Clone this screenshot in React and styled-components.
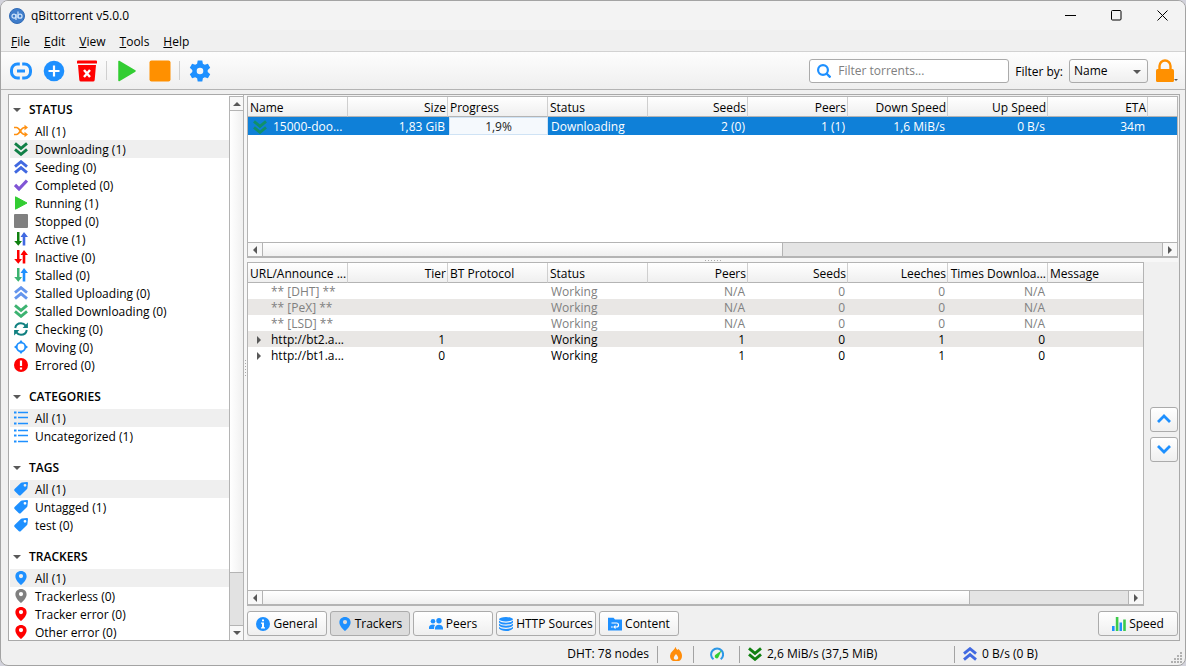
import React from 'react'
import styled, { createGlobalStyle } from 'styled-components'

const GlobalStyle = createGlobalStyle`
    * { box-sizing: border-box; }
    body {
        margin: 0;
        background: #d3d3dc;
        color: #000;
        font: 12px/16px 'Open Sans', 'Noto Sans', sans-serif;
    }
    button, input, select { font: inherit; color: inherit; margin: 0; }
    button { padding: 0; border: 0; background: none; }
    svg { display: block; flex: none; }
    ul { list-style: none; margin: 0; padding: 0; }
`;

const Window = styled.div`
    height: 100vh;
    min-height: 500px;
    display: flex;
    flex-direction: column;
    overflow: hidden;
    background: #f0f0f0;
    border: 1px solid #a3a3a3;
    border-radius: 8px;
`;

const TitleBar = styled.header`
    display: flex;
    align-items: center;
    height: 29px;
    padding-left: 8px;
    background: #f3f3f3;
`;

const Title = styled.h1`
    flex: 1;
    margin: 0 0 0 6px;
    font-size: 12px;
    font-weight: 400;
`;

const WindowButton = styled.button`
    width: 46px;
    height: 28px;
    display: flex;
    align-items: center;
    justify-content: center;
`;

const MenuBar = styled.nav`
    display: flex;
    gap: 14px;
    height: 21px;
    padding: 2px 10px 0;
`;

const MenuItem = styled.button`
    line-height: 18px;
    &::first-letter {
        text-decoration: underline;
    }
`;

const Toolbar = styled.div`
    display: flex;
    align-items: center;
    height: 39px;
    padding: 0 7px 0 3px;
    border-top: 1px solid #d2d2d2;
    border-bottom: 1px solid #b4b4b4;
    background: linear-gradient(#fdfdfd, #efefef);
`;

const ToolButton = styled.button`
    width: 33px;
    height: 32px;
    display: flex;
    align-items: center;
    justify-content: center;
`;

const ToolSeparator = styled.span`
    width: 1px;
    height: 19px;
    margin: 0 3px;
    background: #cfcfcf;
`;

const SearchBox = styled.label`
    display: flex;
    align-items: center;
    gap: 7px;
    width: 200px;
    height: 24px;
    margin-left: auto;
    padding: 0 7px;
    background: #fff;
    border: 1px solid #ababab;
    border-radius: 3px;
`;

const SearchInput = styled.input`
    flex: 1;
    min-width: 0;
    padding: 0;
    border: 0;
    outline: 0;
    background: none;
    &::placeholder {
        color: #808080;
        opacity: 1;
    }
`;

const FilterLabel = styled.label`
    margin: 3px 6px 0;
`;

const SelectWrapper = styled.div`
    position: relative;
    width: 79px;
    svg {
        position: absolute;
        right: 7px;
        top: 9px;
        pointer-events: none;
    }
`;

const FilterSelect = styled.select`
    appearance: none;
    width: 100%;
    height: 24px;
    padding: 0 4px;
    border: 1px solid #ababab;
    border-radius: 3px;
    background: linear-gradient(#fff, #efefef);
`;

const LockButton = styled.button`
    display: flex;
    align-items: flex-end;
    margin-left: 8px;
`;

const Workspace = styled.div`
    flex: 1;
    min-height: 0;
    display: flex;
    margin: 4px 5px 0 7px;
    padding-right: 1px;
    border: 1px solid #a9a9a9;
`;

const Sidebar = styled.aside`
    display: flex;
    width: 235px;
    background: #fff;
    border-right: 1px solid #b4b4b4;
`;

const FilterList = styled.div`
    flex: 1;
    overflow: hidden;
    padding: 2px 0 0 1px;
`;

const FilterSection = styled.section`
    margin-bottom: 10px;
`;

const SectionTitle = styled.button`
    display: flex;
    align-items: center;
    gap: 8px;
    height: 25px;
    padding-left: 3px;
    font-weight: 600;
`;

const FilterRow = styled.li`
    display: flex;
    align-items: center;
    gap: 7px;
    height: 18px;
    padding: 1px 0 0 4px;
    background: ${props => props.$active ? '#efefef' : 'transparent'};
    svg {
        margin-top: -2px;
    }
`;

const VerticalBar = styled.div`
    display: flex;
    flex-direction: column;
    width: 14px;
    margin-top: 1px;
    border-left: 1px solid #b4b4b4;
    background: #e2e2e2;
`;

const HorizontalBar = styled.div`
    display: flex;
    height: 15px;
    margin-top: auto;
    border: solid #b4b4b4;
    border-width: 1px 0;
    background: #e4e4e4;
`;

const ScrollArrow = styled.button`
    flex: none;
    display: flex;
    align-items: center;
    justify-content: center;
    width: ${props => props.$vertical ? '13px' : '15px'};
    height: ${props => props.$vertical ? '15px' : '13px'};
    background: #f8f8f8;
    border: 0 solid #b4b4b4;
    border-width: ${props => props.$edge};
`;

const Thumb = styled.div`
    flex: 0 0 ${props => props.$size};
    margin-${props => props.$vertical ? 'bottom' : 'right'}: auto;
    border: 0 solid #b4b4b4;
    border-width: ${props => props.$vertical ? '0 0 1px' : '0 1px 0 0'};
    background: linear-gradient(${props => props.$vertical ? 'to right' : 'to bottom'}, #fff, #f0f0f0);
`;

const Splitter = styled.div`
    flex: none;
    display: flex;
    align-items: center;
    justify-content: center;
    width: ${props => props.$vertical ? '3px' : 'auto'};
    height: ${props => props.$vertical ? 'auto' : '4px'};
    background: #f7f7f7;
`;

const Main = styled.main`
    flex: 1;
    min-width: 0;
    display: flex;
    flex-direction: column;
    padding-top: 1px;
`;

const Pane = styled.section`
    flex: ${props => props.$height ? '0 0 ' + props.$height : '1'};
    min-width: 0;
    display: flex;
    flex-direction: column;
    background: #fff;
    border: 1px solid #b4b4b4;
`;

const Details = styled.div`
    flex: 1;
    min-height: 0;
    display: flex;
    gap: 6px;
`;

const OrderButtons = styled.div`
    display: flex;
    flex-direction: column;
    justify-content: center;
    gap: 5px;
`;

const DataTable = styled.table`
    width: 100%;
    table-layout: fixed;
    border-collapse: separate;
    border-spacing: 0;
`;

const HeadCell = styled.th`
    width: ${props => props.$fill ? 'auto' : '100px'};
    height: 20px;
    padding: 2px 1px 0 2px;
    overflow: hidden;
    white-space: nowrap;
    font-weight: 400;
    text-align: ${props => props.$right ? 'right' : 'left'};
    background: linear-gradient(#fff, #efefef);
    border-right: ${props => props.$fill ? '0' : '1px solid #cfcfcf'};
    border-bottom: 1px solid #b4b4b4;
`;

const Cell = styled.td`
    padding: 0 3px;
    overflow: hidden;
    white-space: nowrap;
    text-align: ${props => props.$right ? 'right' : 'left'};
`;

const TorrentRow = styled.tr`
    height: 18px;
    color: #fff;
    background: #0f80d8;
    ${Cell} {
        padding-top: 2px;
    }
`;

const TrackerRow = styled.tr`
    height: 16px;
    line-height: 14px;
    color: ${props => props.$muted ? '#808080' : '#000'};
    &:nth-child(even) {
        background: #e9e7e5;
    }
    ${Cell} {
        padding-top: 2px;
    }
`;

const NameContent = styled.div`
    display: flex;
    align-items: center;
    gap: 6px;
    padding-left: 2px;
`;

const TrackerName = styled.div`
    display: flex;
    align-items: center;
    padding-left: 4px;
`;

const ArrowSlot = styled.span`
    width: 16px;
`;

const ProgressCell = styled.td`
    padding: 0 0 0 1px;
`;

const Progress = styled.div`
    height: 18px;
    line-height: 18px;
    text-align: center;
    color: #222;
    background: #f5f9fd;
    border: 1px solid #cfe3f5;
`;

const Tabs = styled.div`
    display: flex;
    gap: 3px;
    padding: 5px 0 4px;
`;

const TabButton = styled.button`
    display: flex;
    align-items: center;
    justify-content: center;
    gap: 3px;
    width: ${props => props.$width || '80px'};
    height: 25px;
    margin-left: ${props => props.$end ? 'auto' : '0'};
    border: 1px solid #ababab;
    border-radius: 3px;
    background: ${props => props.$active ? '#dcdcdc' : 'linear-gradient(#fff, #efefef)'};
`;

const StatusBar = styled.footer`
    display: flex;
    justify-content: flex-end;
    align-items: center;
    height: 24px;
    padding-top: 2px;
`;

const StatusItem = styled.div`
    display: flex;
    align-items: center;
    gap: 5px;
    width: ${props => props.$width || 'auto'};
    height: 17px;
    padding: 0 8px;
    border-left: ${props => props.$first ? '0' : '1px solid #a3a3a3'};
`;

const StatusIcon = styled(StatusItem)`
    justify-content: center;
`;

const Grip = styled.div`
    align-self: flex-end;
    margin: 0 -6px 0 auto;
`;

const Svg = ({ size = 14, children }) => (
    <svg width={size} height={size} viewBox="0 0 14 14" aria-hidden="true">{children}</svg>
);

const Chevrons = ({ color, up }) => (
    <Svg>
        <path
            d={up ? 'M1 6.600 7 1.700l6 4.900M1 12.600 7 7.700l6 4.900' : 'M1 1.400 7 6.300l6-4.900M1 7.400 7 12.300l6-4.900'}
            fill="none" stroke={color} strokeWidth="2.900"
        />
    </Svg>
);

const Arrows = ({ down, up }) => (
    <Svg>
        <path d="M3 0h2.500v9H8l-3.700 4.800L.2 9H3z" fill={down} />
        <path d="M8.700 13.500h2.600V5H14L10 0 6.500 5h2.200z" fill={up} />
    </Svg>
);

const Shuffle = () => (
    <Svg>
        <path d="M0 3.500h2.500c3.500 0 4 7 8 7h1.500M0 10.500h2.500c3.500 0 4-7 8-7h1.500" fill="none" stroke="#ff9010" strokeWidth="1.700" />
        <path d="m10.500.800 3.500 2.700-3.500 2.700zM10.500 7.800l3.500 2.700-3.500 2.700z" fill="#ff9010" />
    </Svg>
);

const Check = () => (
    <Svg><path d="m1 7 4 4 8-8.500" fill="none" stroke="#8055d5" strokeWidth="3.200" /></Svg>
);

const Play = () => (
    <Svg><path d="M1.500.8v12.400L13 7z" fill="#32cd32" stroke="#32cd32" strokeLinejoin="round" /></Svg>
);

const Stop = () => (
    <Svg><rect width="14" height="14" rx="1" fill="#808080" /></Svg>
);

const Recheck = () => (
    <Svg>
        <path d="M1.200 6C1.800 3 4.200 1.300 7 1.300c2 0 3.600.9 4.600 2.300M12.800 8c-.6 3-3 4.700-5.800 4.700-2 0-3.600-.9-4.600-2.300" fill="none" stroke="#108080" strokeWidth="2" />
        <path d="M13.900.5V6H8.600zM.1 13.500V8h5.300z" fill="#108080" />
    </Svg>
);

const Moving = () => (
    <Svg>
        <circle cx="7" cy="7" r="4.300" fill="none" stroke="#1e90ff" strokeWidth="1.800" />
        <path d="M7 0 9 2.500H5zM7 14l2-2.500H5zM0 7l2.500-2v4zM14 7l-2.500-2v4z" fill="#1e90ff" />
    </Svg>
);

const ErrorIcon = () => (
    <Svg>
        <circle cx="7" cy="7" r="7" fill="#f00" />
        <path d="M5.900 2.500h2.200v5.600H5.900zM5.900 9.400h2.200v2.200H5.900z" fill="#fff" />
    </Svg>
);

const ListIcon = () => (
    <Svg>
        <path d="M4 1.500h10M4 6.500h10M4 12.500h10" stroke="#1e90ff" strokeWidth="1.400" />
        <path d="M0 1.500h2.500M0 6.500h2.500M0 12.500h2.500" stroke="#1e90ff" strokeWidth="2.200" />
    </Svg>
);

const Tag = () => (
    <Svg>
        <path fillRule="evenodd" d="M7.800.6 13 0q1 0 1 1l-.6 5.200q-.1.600-.6 1L6.700 13.200q-.9.800-1.800 0L.6 8.900q-.8-.9 0-1.800L6.800 1q.4-.4 1-.4zM11 1.900a1.400 1.400 0 1 0 0 2.800 1.400 1.400 0 0 0 0-2.800z" fill="#1e90ff" />
    </Svg>
);

const Pin = ({ color = '#1e90ff' }) => (
    <Svg>
        <path fillRule="evenodd" d="M7 0C3.700 0 1.400 2.400 1.400 5.400 1.400 8.500 4.500 12 7 14c2.500-2 5.600-5.500 5.600-8.600C12.600 2.400 10.300 0 7 0zm0 3a2.100 2.100 0 1 1 0 4.200A2.100 2.100 0 0 1 7 3z" fill={color} />
    </Svg>
);

const Info = () => (
    <Svg>
        <circle cx="7" cy="7" r="7" fill="#1e90ff" />
        <path d="M6 2.500h2v1.800H6zM5 5.500h3v4.700h1v1.200H5v-1.200h1V6.700H5z" fill="#fff" />
    </Svg>
);

const PeersIcon = () => (
    <Svg>
        <circle cx="4" cy="4.200" r="2.300" fill="#1e90ff" />
        <circle cx="10" cy="3.800" r="2.700" fill="#1e90ff" />
        <path d="M0 12V10q.5-2.500 4-2.500 1.500 0 2 .6Q5 9 5 12zM6 12.500v-1.700q.6-3 4-3t4 3v1.700z" fill="#1e90ff" />
    </Svg>
);

const Sources = () => (
    <Svg>
        <ellipse cx="7" cy="2.200" rx="7" ry="2.200" fill="#1e90ff" />
        <path d="M0 3.500q2 2.200 7 2.200t7-2.200v1.900q-2 2.200-7 2.200T0 5.400zM0 6.600q2 2.200 7 2.200t7-2.200v1.900q-2 2.200-7 2.200T0 8.500zM0 9.700q2 2.200 7 2.200t7-2.200v1.900Q12 14 7 14t-7-2.400z" fill="#1e90ff" />
    </Svg>
);

const ContentIcon = () => (
    <Svg>
        <path d="M0 .8h5.500L7 2.500h7v11H0z" fill="#1e90ff" />
        <path d="M3.500 6h5q2 0 2 2t-2 2H7M3 10h1.800" fill="none" stroke="#fff" strokeWidth="1.200" />
        <path d="m7.500 7.800-2.300 2.200 2.300 2.200z" fill="#fff" />
    </Svg>
);

const SpeedIcon = () => (
    <Svg>
        <path d="M0 9h2.600v5H0zM7.500 5.500H10V14H7.500z" fill="#1e90ff" />
        <path d="M3.800 0h2.600v14H3.800zM11.200 2.500h2.600V14h-2.600z" fill="#3ccb4c" />
    </Svg>
);

const Flame = () => (
    <Svg>
        <path fillRule="evenodd" d="M6.500-.5q.4 2.500 2 3.600l.8-1q3.700 3 3.700 6.700 0 5.700-6 5.700T1 8.800Q1 6 4 3.500q2.200-1.700 2.500-4zM7 7q-2.300 2.400-2.300 4 0 1.800 2.300 1.800T9.300 11Q9.300 9.400 7 7z" fill="#ff8c0a" />
    </Svg>
);

const Gauge = () => (
    <Svg>
        <path d="M3.500 12.300A6 6 0 1 1 10.700 12.300" fill="none" stroke="#2c98e6" strokeWidth="2" />
        <path d="M11.500 3.500 8.700 9.800A2 2 0 1 1 5.500 7.800z" fill="#32cd32" />
    </Svg>
);

const Caret = ({ dir = 'down', size = 8 }) => {
    const paths = {
        down: 'M0 2h8L4 6z',
        up: 'M0 6h8L4 2z',
        left: 'M6 0v8L2 4z',
        right: 'M2 0v8l4-4z',
    };
    return (
        <svg width={size} height={size} viewBox="0 0 8 8" aria-hidden="true">
            <path d={paths[dir]} fill="#585858" />
        </svg>
    );
};

const Logo = () => (
    <svg width="16" height="16" viewBox="0 0 16 16" aria-hidden="true">
        <circle cx="8" cy="8" r="7.500" fill="#3f7dcb" stroke="#326cb5" />
        <circle cx="5" cy="8.200" r="2" fill="none" stroke="#cfe4fb" strokeWidth="1.200" />
        <path d="M7 6v6M9 3.500v6.700" stroke="#cfe4fb" strokeWidth="1.200" />
        <circle cx="11" cy="8.200" r="2" fill="none" stroke="#cfe4fb" strokeWidth="1.200" />
    </svg>
);

const ToolIcon = ({ children }) => (
    <svg width="22" height="22" viewBox="0 0 22 22" aria-hidden="true">{children}</svg>
);

const LinkIcon = () => (
    <ToolIcon>
        <path d="M9.800 4H7.500a6 6 0 0 0-6 6v2a6 6 0 0 0 6 6h2.300M12.200 4h2.300a6 6 0 0 1 6 6v2a6 6 0 0 1-6 6h-2.300M7 11h8" fill="none" stroke="#1e90ff" strokeWidth="3" />
    </ToolIcon>
);

const AddIcon = () => (
    <ToolIcon>
        <circle cx="11" cy="11" r="10.300" fill="#1e90ff" />
        <path d="M11 5.500v11M5.500 11h11" stroke="#fff" strokeWidth="2.200" />
    </ToolIcon>
);

const TrashIcon = () => (
    <ToolIcon>
        <path d="M1 1.500Q1 .5 2 .5h18q1 0 1 1v2H1zM2 5h18l-1.300 15q-.2 1.500-1.700 1.500H5q-1.500 0-1.700-1.500z" fill="#f00" />
        <path d="m8 10 6 7M14 10l-6 7" stroke="#fff" strokeWidth="2.400" />
    </ToolIcon>
);

const StartIcon = () => (
    <ToolIcon><path d="M3 1.500v19L19 11z" fill="#32cd32" stroke="#32cd32" strokeWidth="1.500" strokeLinejoin="round" /></ToolIcon>
);

const PauseIcon = () => (
    <ToolIcon><rect x=".5" y=".5" width="21" height="21" rx="2" fill="#ff9000" /></ToolIcon>
);

const GearIcon = () => (
    <ToolIcon>
        <path
            fillRule="evenodd"
            d="M8.700.5h4.600l.6 3.200 1.900 1.100 3.100-1.100 2.300 4-2.500 2.200v2.200l2.500 2.200-2.300 4-3.100-1.100-1.900 1.100-.6 3.200H8.700l-.6-3.200-1.900-1.100-3.100 1.100-2.300-4 2.500-2.200V9.900L.8 7.700l2.300-4 3.100 1.100 1.900-1.100zM11 7.700a3.300 3.300 0 1 0 0 6.600 3.300 3.300 0 0 0 0-6.600z"
            fill="#1e90ff"
        />
    </ToolIcon>
);

const LockIcon = () => (
    <svg width="18" height="23" viewBox="0 0 18 23" aria-hidden="true">
        <path d="M3.500 11V7a5.500 5.500 0 0 1 11 0v4" fill="none" stroke="#ff9000" strokeWidth="2.400" />
        <rect y="10" width="18" height="13" rx="1.500" fill="#ff9000" />
    </svg>
);

const sections = [
    {
        title: 'STATUS',
        rows: [
            ['All (1)', <Shuffle />],
            ['Downloading (1)', <Chevrons color="#118047" />, true],
            ['Seeding (0)', <Chevrons up color="#4169e1" />],
            ['Completed (0)', <Check />],
            ['Running (1)', <Play />],
            ['Stopped (0)', <Stop />],
            ['Active (1)', <Arrows down="#108010" up="#4169e1" />],
            ['Inactive (0)', <Arrows down="#f00" up="#f00" />],
            ['Stalled (0)', <Arrows down="#3cb371" up="#1e90ff" />],
            ['Stalled Uploading (0)', <Chevrons up color="#6495ed" />],
            ['Stalled Downloading (0)', <Chevrons color="#3cb371" />],
            ['Checking (0)', <Recheck />],
            ['Moving (0)', <Moving />],
            ['Errored (0)', <ErrorIcon />],
        ],
    },
    {
        title: 'CATEGORIES',
        rows: [
            ['All (1)', <ListIcon />, true],
            ['Uncategorized (1)', <ListIcon />],
        ],
    },
    {
        title: 'TAGS',
        rows: [
            ['All (1)', <Tag />, true],
            ['Untagged (1)', <Tag />],
            ['test (0)', <Tag />],
        ],
    },
    {
        title: 'TRACKERS',
        rows: [
            ['All (1)', <Pin />, true],
            ['Trackerless (0)', <Pin color="#808080" />],
            ['Tracker error (0)', <Pin color="#f00" />],
            ['Other error (0)', <Pin color="#f00" />],
        ],
    },
];

// [label, right aligned]
const torrentColumns = [
    ['Name'], ['Size', true], ['Progress'], ['Status'], ['Seeds', true],
    ['Peers', true], ['Down Speed', true], ['Up Speed', true], ['ETA', true],
];

const trackerColumns = [
    ['URL/Announce ...'], ['Tier', true], ['BT Protocol'], ['Status'], ['Peers', true],
    ['Seeds', true], ['Leeches', true], ['Times Downloa...', true],
];

const trackers = [
    { url: '** [DHT] **', tier: '', peers: 'N/A', seeds: 0, leeches: 0, times: 'N/A', muted: true },
    { url: '** [PeX] **', tier: '', peers: 'N/A', seeds: 0, leeches: 0, times: 'N/A', muted: true },
    { url: '** [LSD] **', tier: '', peers: 'N/A', seeds: 0, leeches: 0, times: 'N/A', muted: true },
    { url: 'http://bt2.a...', tier: 1, peers: 1, seeds: 0, leeches: 1, times: 0 },
    { url: 'http://bt1.a...', tier: 0, peers: 1, seeds: 0, leeches: 1, times: 0 },
];

const HScroll = ({ size }) => (
    <HorizontalBar>
        <ScrollArrow $edge="0 1px 0 0" aria-label="Scroll left"><Caret dir="left" /></ScrollArrow>
        <Thumb $size={size} />
        <ScrollArrow $edge="0 0 0 1px" aria-label="Scroll right"><Caret dir="right" /></ScrollArrow>
    </HorizontalBar>
);

const TorrentTable = () => (
    <Pane $height="162px">
        <DataTable>
            <thead>
                <tr>
                    {torrentColumns.map(([label, right]) => (
                        <HeadCell key={label} $right={right}>{label}</HeadCell>
                    ))}
                    <HeadCell $fill />
                </tr>
            </thead>
            <tbody>
                <TorrentRow>
                    <Cell><NameContent><Chevrons color="#10906a" />15000-doo...</NameContent></Cell>
                    <Cell $right>1,83 GiB</Cell>
                    <ProgressCell><Progress>1,9%</Progress></ProgressCell>
                    <Cell>Downloading</Cell>
                    <Cell $right>2 (0)</Cell>
                    <Cell $right>1 (1)</Cell>
                    <Cell $right>1,6 MiB/s</Cell>
                    <Cell $right>0 B/s</Cell>
                    <Cell $right>34m</Cell>
                    <Cell />
                </TorrentRow>
            </tbody>
        </DataTable>
        <HScroll size="56%" />
    </Pane>
);

const TrackerTable = () => (
    <Pane>
        <DataTable>
            <thead>
                <tr>
                    {trackerColumns.map(([label, right]) => (
                        <HeadCell key={label} $right={right}>{label}</HeadCell>
                    ))}
                    <HeadCell $fill>Message</HeadCell>
                </tr>
            </thead>
            <tbody>
                {trackers.map(item => (
                    <TrackerRow key={item.url} $muted={item.muted}>
                        <Cell>
                            <TrackerName>
                                <ArrowSlot>{!item.muted && <Caret dir="right" size={8} />}</ArrowSlot>
                                {item.url}
                            </TrackerName>
                        </Cell>
                        <Cell $right>{item.tier}</Cell>
                        <Cell />
                        <Cell>Working</Cell>
                        <Cell $right>{item.peers}</Cell>
                        <Cell $right>{item.seeds}</Cell>
                        <Cell $right>{item.leeches}</Cell>
                        <Cell $right>{item.times}</Cell>
                        <Cell />
                    </TrackerRow>
                ))}
            </tbody>
        </DataTable>
        <HScroll size="79%" />
    </Pane>
);

const App = () => {
    return (
        <>
            <GlobalStyle />
            <Window>
                <TitleBar>
                    <Logo />
                    <Title>qBittorrent v5.0.0</Title>
                    <WindowButton aria-label="Minimize">
                        <svg width="11" height="11"><path d="M0 5.500h11" stroke="#000" /></svg>
                    </WindowButton>
                    <WindowButton aria-label="Maximize">
                        <svg width="11" height="11"><rect x=".5" y=".5" width="9.500" height="9.500" rx="1" fill="none" stroke="#000" /></svg>
                    </WindowButton>
                    <WindowButton aria-label="Close">
                        <svg width="11" height="11"><path d="m.5.5 10 10M10.500.5l-10 10" stroke="#000" /></svg>
                    </WindowButton>
                </TitleBar>
                <MenuBar>
                    {['File', 'Edit', 'View', 'Tools', 'Help'].map(name => <MenuItem key={name}>{name}</MenuItem>)}
                </MenuBar>
                <Toolbar>
                    <ToolButton aria-label="Add torrent link"><LinkIcon /></ToolButton>
                    <ToolButton aria-label="Add torrent file"><AddIcon /></ToolButton>
                    <ToolButton aria-label="Remove"><TrashIcon /></ToolButton>
                    <ToolSeparator />
                    <ToolButton aria-label="Start"><StartIcon /></ToolButton>
                    <ToolButton aria-label="Stop"><PauseIcon /></ToolButton>
                    <ToolSeparator />
                    <ToolButton aria-label="Options"><GearIcon /></ToolButton>
                    <SearchBox>
                        <svg width="14" height="14" viewBox="0 0 14 14" aria-hidden="true">
                            <circle cx="6" cy="6" r="4.900" fill="none" stroke="#1e90ff" strokeWidth="2.200" />
                            <path d="m9.500 9.500 4 4" stroke="#1e90ff" strokeWidth="2.400" />
                        </svg>
                        <SearchInput placeholder="Filter torrents..." aria-label="Filter torrents" />
                    </SearchBox>
                    <FilterLabel htmlFor="filter-by">Filter by:</FilterLabel>
                    <SelectWrapper>
                        <FilterSelect id="filter-by"><option>Name</option></FilterSelect>
                        <Caret />
                    </SelectWrapper>
                    <LockButton aria-label="Lock"><LockIcon /><Caret size={4} /></LockButton>
                </Toolbar>
                <Workspace>
                    <Sidebar>
                        <FilterList>
                            {sections.map(section => (
                                <FilterSection key={section.title}>
                                    <SectionTitle><Caret />{section.title}</SectionTitle>
                                    <ul>
                                        {section.rows.map(([label, icon, active]) => (
                                            <FilterRow key={label} $active={active}>{icon}{label}</FilterRow>
                                        ))}
                                    </ul>
                                </FilterSection>
                            ))}
                        </FilterList>
                        <VerticalBar>
                            <ScrollArrow $vertical $edge="1px 0" aria-label="Scroll up"><Caret dir="up" /></ScrollArrow>
                            <Thumb $vertical $size="85%" />
                            <ScrollArrow $vertical $edge="1px 0 0" aria-label="Scroll down"><Caret /></ScrollArrow>
                        </VerticalBar>
                    </Sidebar>
                    <Splitter $vertical>
                        <svg width="1" height="16"><path d="M.5 0v16" stroke="#aaa" strokeDasharray="1 2" /></svg>
                    </Splitter>
                    <Main>
                        <TorrentTable />
                        <Splitter>
                            <svg width="16" height="1"><path d="M0 .5h16" stroke="#aaa" strokeDasharray="1 2" /></svg>
                        </Splitter>
                        <Details>
                            <TrackerTable />
                            <OrderButtons>
                                <TabButton $width="28px" aria-label="Move up">
                                    <Svg><path d="m1 10 6-6 6 6" fill="none" stroke="#1e90ff" strokeWidth="2.800" /></Svg>
                                </TabButton>
                                <TabButton $width="28px" aria-label="Move down">
                                    <Svg><path d="m1 4 6 6 6-6" fill="none" stroke="#1e90ff" strokeWidth="2.800" /></Svg>
                                </TabButton>
                            </OrderButtons>
                        </Details>
                        <Tabs>
                            <TabButton><Info />General</TabButton>
                            <TabButton $active><Pin />Trackers</TabButton>
                            <TabButton><PeersIcon />Peers</TabButton>
                            <TabButton $width="100px"><Sources />HTTP Sources</TabButton>
                            <TabButton><ContentIcon />Content</TabButton>
                            <TabButton $end><SpeedIcon />Speed</TabButton>
                        </Tabs>
                    </Main>
                </Workspace>
                <StatusBar>
                    <StatusItem $first>DHT: 78 nodes</StatusItem>
                    <StatusIcon $width="36px"><Flame /></StatusIcon>
                    <StatusIcon $width="46px"><Gauge /></StatusIcon>
                    <StatusItem $width="215px"><Chevrons color="#108010" />2,6 MiB/s (37,5 MiB)</StatusItem>
                    <StatusItem $width="231px">
                        <Chevrons up color="#4169e1" />0 B/s (0 B)
                        <Grip>
                            <svg width="12" height="12"><path d="M10 1v11M7 4v8M4 7v5M1 10v2" stroke="#b0b0b0" strokeWidth="2" strokeDasharray="2 1" /></svg>
                        </Grip>
                    </StatusItem>
                </StatusBar>
            </Window>
        </>
    );
};

export default App;
